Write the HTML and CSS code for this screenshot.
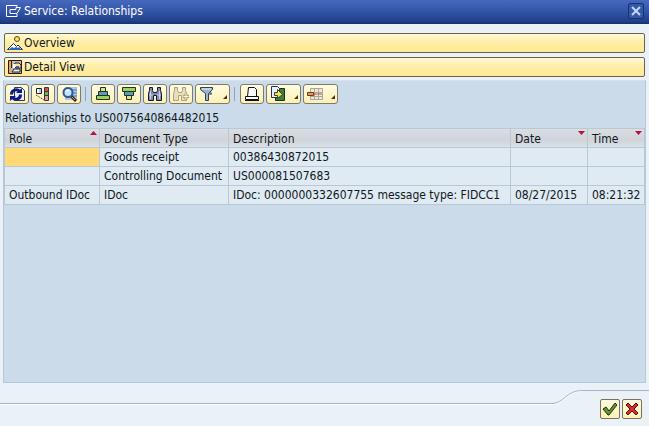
FILE: index.html
```html
<!DOCTYPE html>
<html lang="en">
<head>
<meta charset="utf-8">
<title>Service: Relationships</title>
<link rel="stylesheet" href="styles.css">
</head>
<body>
<div class="dialog">
  <header class="titlebar">
    <svg class="title-icon" width="16" height="12" viewBox="0 0 16 12" fill="none" stroke="#fff"><path d="M11 2V.5H.5v11H11V9M4 4.500h6v-2l4.500 0L11 8.500H4z"/></svg>
    <h1 class="title">Service: Relationships</h1>
    <button class="close" type="button" aria-label="Close"><svg width="10" height="10" viewBox="0 0 10 10" fill="none" stroke="#c3d7fa" stroke-width="2"><path d="M1 1l8 8M9 1L1 9"/></svg></button>
  </header>

  <main class="content">
    <button class="wide" type="button">
      <svg width="16" height="16" viewBox="0 0 16 16"><circle cx="10" cy="4" r="2.500" fill="#ffe36b" stroke="#5a4718"/><path d="M.5 14.500L6.500 8.500l3 3 1.500-1.500 4.500 4.500z" fill="#fff" stroke="#1b2c4c"/><path d="M1 15l4-3 2 1 2-1 2 1 1-1 3 3z" fill="#2f62b8"/></svg>
      <span>Overview</span>
    </button>
    <button class="wide" type="button">
      <svg width="16" height="16" viewBox="0 0 16 16"><path d="M1.500 1.500h13v13h-13z" fill="#b4bcc9" stroke="#33180a" stroke-width="1"/><path d="M2 2h2v12H2z" fill="#e8a24c"/><path d="M4.500 2v7M5 13l2-3h6v3z" fill="#eef3fb" stroke="#252525"/><path d="M8 4h4l2 2v3H9l-2-2z" fill="#ffe09a" stroke="#30251c"/><path d="M9 7h3v2H9z" fill="#3468a8"/><path d="M6 5h2v4H6z" fill="#fff"/></svg>
      <span>Detail View</span>
    </button>

    <section class="panel">
      <div class="toolbar" role="toolbar" aria-label="List functions">
        <button class="tool" type="button" aria-label="Refresh"><svg width="18" height="16" viewBox="0 0 18 16"><path d="M6.500 1.500h7l3 3v10h-10z" fill="#e9f0fb" stroke="#303a52"/><path d="M3.500 8.500a4.500 4.500 0 0 1 8-3M12.500 8.500a4.500 4.500 0 0 1-8 3" fill="none" stroke="#101c86" stroke-width="3"/><path d="M8 7h6V2zM8 10H2v5z" fill="#101c86"/></svg></button>
        <button class="tool" type="button" aria-label="Hierarchy"><svg width="18" height="16" viewBox="0 0 18 16"><path d="M2.500 2.500h5v5h-5z" fill="#fff" stroke="#1b222c"/><path d="M5 3h2v4H5z" fill="#b5cbe8"/><path d="M10.500 1.500h4v13h-4z" fill="#fff" stroke="#32383c"/><path d="M11 2h3v3h-3z" fill="#e04a4a"/><path d="M11 6h3v3h-3z" fill="#65b65a"/><path d="M11 10h3v4h-3z" fill="#e79aa2"/><path d="M10 5.500h5M10 9.500h5" stroke="#32383c"/><path d="M2 9l8 5" stroke="#222" stroke-dasharray="1 1"/></svg></button>
        <button class="tool" type="button" aria-label="Display details"><svg width="18" height="16" viewBox="0 0 18 16"><path d="M5 1h12v13H5z" fill="#a9c4e6"/><path d="M5 4h12M5 7h12M5 10h12" stroke="#4c7ac2"/><path d="M11 10l5 5" stroke="#3d2419" stroke-width="3"/><path d="M12 11l3 3" stroke="#dc9a43"/><circle cx="8" cy="6.500" r="4.500" fill="#bce9f8" stroke="#35578e" stroke-width="2"/><path d="M6 5l3-1" stroke="#fff"/></svg></button>
        <span class="separator"></span>
        <button class="tool" type="button" aria-label="Sort ascending"><svg width="18" height="16" viewBox="0 0 18 16" stroke="#183526"><path d="M6.500 1.500h5v4h-5z" fill="#e5e27a"/><path d="M4.500 5.500h9v4h-9z" fill="#5d9bb8"/><path d="M2.500 9.500h13v4h-13z" fill="#a2cf58"/></svg></button>
        <button class="tool" type="button" aria-label="Sort descending"><svg width="18" height="16" viewBox="0 0 18 16" stroke="#183526"><path d="M2.500 1.500h13v4h-13z" fill="#a2cf58"/><path d="M4.500 5.500h9v4h-9z" fill="#5d9bb8"/><path d="M6.500 9.500h5v4h-5z" fill="#e5e27a"/></svg></button>
        <button class="tool" type="button" aria-label="Find"><svg width="18" height="16" viewBox="0 0 18 16" stroke="#17182c"><path d="M3.500 1.500h3v3l1 2h3l1-2v-3h3v3l1 3v7h-5v-5h-3v5h-5v-7l1-3z" fill="#7e8bb4"/><path d="M4.500 5v8M13.500 5v8M3 9h4M11 9h4" stroke="#c8d1e6"/></svg></button>
        <button class="tool" type="button" aria-label="Find next" disabled><svg width="18" height="16" viewBox="0 0 18 16" stroke="#aaa184"><path d="M2.500 1.500h3v3l1 2h3l1-2v-3h3v3l1 3v7h-5v-5h-3v5h-5v-7l1-3z" fill="#e6dfbd"/><path d="M11 10.500h6M14 7.500v6" stroke="#aaa184" stroke-width="3"/><path d="M11.500 10.500h5M14 8v5" stroke="#fff6cf"/></svg></button>
        <button class="tool menu" type="button" aria-label="Filter"><svg width="18" height="16" viewBox="0 0 18 16"><path d="M2.500 1.500h12v2l-4 4v7h-3v-7l-5-4z" fill="#9db5cc" stroke="#2f4052"/><path d="M4 3h9" stroke="#e8f3ff"/><circle cx="12.500" cy="7.500" r="1.500" fill="#5d768d"/></svg><span class="corner"></span></button>
        <span class="separator"></span>
        <button class="tool" type="button" aria-label="Print"><svg width="18" height="16" viewBox="0 0 18 16" fill="#fff" stroke="#111"><path d="M5.500 1.500h6l2 2v7h-9z"/><path d="M2.500 10.500h13v3h-13z"/><path d="M2 14.500h14"/></svg></button>
        <button class="tool menu" type="button" aria-label="Export"><svg width="18" height="16" viewBox="0 0 18 16"><path d="M9.500 2.500h6v12h-9v-3z" fill="#3f8039" stroke="#173316"/><path d="M2.500.5h6l2 2v9h-8z" fill="#e5f0ff" stroke="#24324e"/><path d="M5.500 6.500h3v-3l5 5-5 4v-3h-3z" fill="#f2e36c" stroke="#3c441b"/></svg><span class="corner"></span></button>
        <button class="tool menu" type="button" aria-label="Choose layout"><svg width="18" height="16" viewBox="0 0 18 16"><path d="M4.500 2.500h12v11h-12zM8.500 2v12M12.500 2v12M4 6.500h12M4 10.500h12" fill="#efe9d3" stroke="#aaa89d"/><path d="M1.500 6.500h6v3h-6z" fill="#d7a45b" stroke="#793520"/><path d="M8 8h8" stroke="#c45848"/></svg><span class="corner"></span></button>
      </div>

      <table class="grid">
        <caption>Relationships to US0075640864482015</caption>
        <colgroup><col class="role"><col class="type"><col><col class="date"><col class="time"></colgroup>
        <thead>
          <tr><th class="ascending">Role</th><th>Document Type</th><th>Description</th><th class="descending">Date</th><th class="descending">Time</th></tr>
        </thead>
        <tbody>
          <tr><td class="selected"></td><td>Goods receipt</td><td>00386430872015</td><td></td><td></td></tr>
          <tr><td></td><td>Controlling Document</td><td>US000081507683</td><td></td><td></td></tr>
          <tr><td>Outbound IDoc</td><td>IDoc</td><td>IDoc: 0000000332607755 message type: FIDCC1</td><td>08/27/2015</td><td>08:21:32</td></tr>
        </tbody>
      </table>
    </section>
  </main>

  <footer class="footer">
    <span class="rule-low"></span>
    <svg class="curve" width="30" height="16" viewBox="0 0 30 16" fill="none"><path d="M0 14.500C12 14.500 14 1.500 30 1.500" stroke="#fff"/><path d="M0 13.500C12 13.500 14 .5 30 .5" stroke="#a9b5bf"/></svg>
    <div class="actions">
      <button class="action" type="button" aria-label="Continue"><svg width="16" height="16" viewBox="0 0 16 16"><path d="M1 8l3-2 3 4 6-8 2 2-8 10H6z" fill="#62962e" stroke="#202f0e"/></svg></button>
      <button class="action" type="button" aria-label="Cancel"><svg width="16" height="16" viewBox="0 0 16 16"><path d="M2 4l2-2 4 4 4-4 2 2-4 4 4 4-2 2-4-4-4 4-2-2 4-4z" fill="#dc2929" stroke="#590e14"/></svg></button>
    </div>
  </footer>
</div>
</body>
</html>
```
FILE: styles.css
```css
* { box-sizing: border-box; }

body {
  margin: 0;
  background: #eaf1f7;
  color: #101820;
  font: 12px/16px "DejaVu Sans Condensed", "Noto Sans", sans-serif;
}

button {
  margin: 0;
  padding: 0;
  color: inherit;
  font: inherit;
}

svg { display: block; flex: none; }

.dialog {
  display: flex;
  flex-direction: column;
  min-height: 100vh;
}

.titlebar {
  display: flex;
  align-items: center;
  height: 24px;
  padding: 0 5px 2px 6px;
  gap: 2px;
  background: linear-gradient(#4668bd, #3456aa 45%, #203f87 90%, #172e6c);
  color: #fff;
}

.title {
  flex: 1;
  margin: 0;
  font-size: 12px;
  font-weight: normal;
}

.close {
  display: grid;
  place-items: center;
  width: 16px;
  height: 16px;
  border: 1px solid #173171;
  border-radius: 2px;
  background: #3558a8;
}

.content {
  flex: 1;
  display: flex;
  flex-direction: column;
  gap: 4px;
  padding: 9px 4px 0;
}

.wide {
  display: flex;
  align-items: center;
  gap: 1px;
  height: 20px;
  padding: 0 2px;
  border: 1px solid #69644f;
  border-radius: 2px;
  background: linear-gradient(#fff9d8, #ffeea6 45%, #fde994);
}

.panel {
  flex: 1;
  margin: -1px -1px 0;
  border: 1px solid #b4c8d8;
  border-top-color: #d5e2ec;
  background: #ccdbe9;
}

.toolbar {
  display: flex;
  align-items: center;
  gap: 2px;
  height: 29px;
  padding: 2px 1px 5px;
}

.tool {
  display: flex;
  align-items: center;
  justify-content: center;
  width: 24px;
  height: 20px;
  border: 1px solid #7f7b69;
  border-radius: 3px;
  background: linear-gradient(#fffbe2, #fdf0b6);
}

.menu {
  justify-content: space-between;
  width: 35px;
  padding: 0 2px;
}

.corner {
  align-self: flex-end;
  width: 4px;
  height: 4px;
  margin-bottom: 4px;
  background: #503014;
  clip-path: polygon(100% 0, 100% 100%, 0 100%);
}

.separator {
  width: 1px;
  height: 14px;
  margin: 0 3px 0 2px;
  background: #93a5b5;
}

.grid {
  width: 100%;
  table-layout: fixed;
  border-collapse: collapse;
}

.grid caption {
  height: 18px;
  padding: 0 1px;
  text-align: left;
}

.role { width: 95px; }
.type { width: 129px; }
.date { width: 77px; }
.time { width: 57px; }

.grid th,
.grid td {
  height: 19px;
  padding: 0 4px;
  border: 1px solid #b9c8d5;
  background: #dfeaf3;
  font-weight: normal;
  text-align: left;
  white-space: nowrap;
}

.grid th {
  position: relative;
  padding-top: 2px;
  background: linear-gradient(#d9dde2, #cfd4da 60%, #dde2e7);
}

.grid td.selected { background: #ffd978; }

.ascending::after,
.descending::after {
  content: "";
  position: absolute;
  top: 2px;
  right: 2px;
  width: 7px;
  height: 4px;
  background: #b3123f;
}

.ascending::after { clip-path: polygon(50% 0, 100% 100%, 0 100%); }
.descending::after { clip-path: polygon(0 0, 100% 0, 50% 100%); }

.footer {
  display: flex;
  height: 43px;
  padding-top: 7px;
}

.rule-low {
  flex: 1;
  height: 14px;
  border-bottom: 1px solid #a9b5bf;
  box-shadow: 0 1px #fff;
}

.actions {
  display: flex;
  gap: 2px;
  padding: 8px 7px 0 18px;
  border-top: 1px solid #a9b5bf;
}

.action {
  display: grid;
  place-items: center;
  width: 20px;
  height: 20px;
  border: 1px solid #77725d;
  border-radius: 2px;
  background: linear-gradient(#fffbe2, #fdf0b6);
}
```
